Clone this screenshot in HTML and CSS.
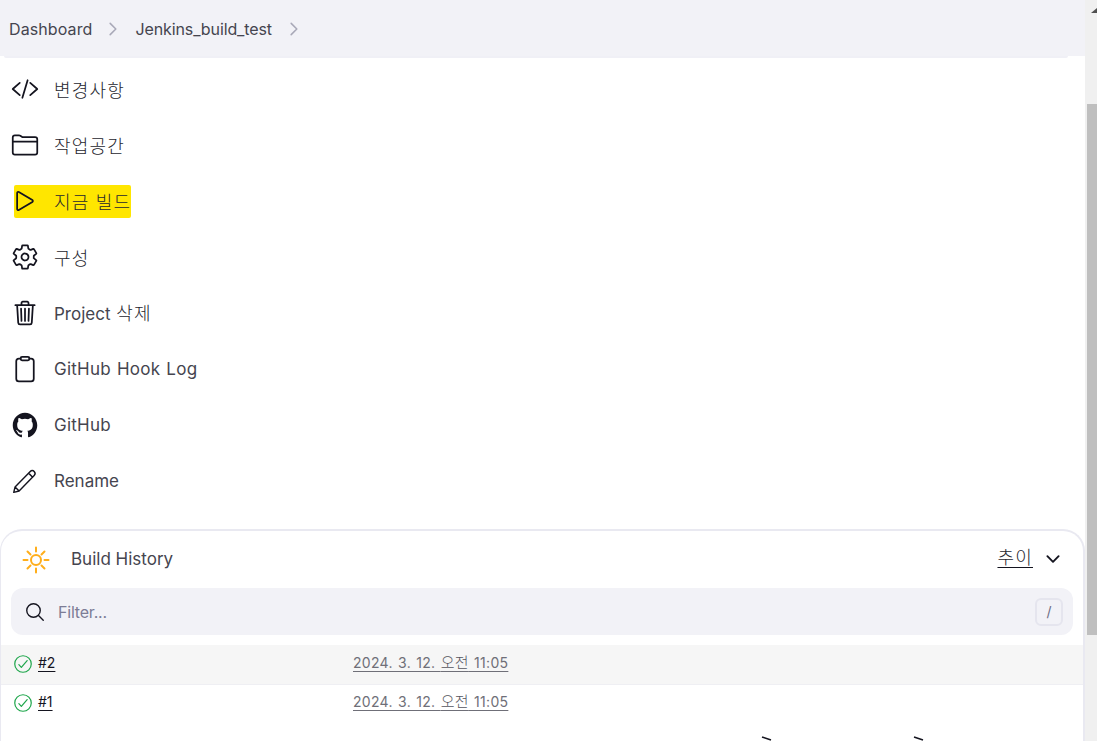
FILE: index.html
```html
<!DOCTYPE html>
<html lang="ko">
<head>
<meta charset="utf-8">
<title>Jenkins_build_test</title>
<link rel="stylesheet" href="styles.css">
</head>
<body>
<div class="page">
  <main class="main">
    <header class="crumbs">
      <a class="crumb crumb-root">Dashboard</a>
      <svg class="crumb-sep" viewBox="0 0 512 512"><path d="M184 112l144 144-144 144"/></svg>
      <a class="crumb crumb-job">Jenkins_build_test</a>
      <svg class="crumb-sep" viewBox="0 0 512 512"><path d="M184 112l144 144-144 144"/></svg>
    </header>
    <div class="crumbs-edge"></div>
    <nav class="tasks">
      <a class="task">
        <svg class="icon" viewBox="0 0 512 512"><path d="M160 368L32 256l128-112M352 368l128-112-128-112M304 96l-96 320"/></svg>
        <span class="ko">변경사항</span>
      </a>
      <a class="task">
        <svg class="icon" viewBox="0 0 512 512"><path d="M440 432H72a40 40 0 01-40-40V120a40 40 0 0140-40h75.89a40 40 0 0122.19 6.72l27.84 18.56a40 40 0 0022.19 6.72H440a40 40 0 0140 40v240a40 40 0 01-40 40zM32 192h448"/></svg>
        <span class="ko">작업공간</span>
      </a>
      <a class="task">
        <span class="marker">
          <svg class="icon icon-play" viewBox="0 0 512 512"><path d="M112 111v290c0 17.44 17 28.52 31 20.16l247.9-148.37c12.12-7.25 12.12-26.33 0-33.58L143 90.84c-14-8.36-31 2.72-31 20.16z"/></svg>
          <span class="ko">지금 빌드</span>
        </span>
      </a>
      <a class="task">
        <svg class="icon" viewBox="0 0 512 512"><path d="M262.29 192.31a64 64 0 1057.4 57.4 64.13 64.13 0 00-57.4-57.4zM416.39 256a154.34 154.34 0 01-1.53 20.79l45.21 35.46a10.81 10.81 0 012.45 13.75l-42.77 74a10.81 10.81 0 01-13.14 4.59l-44.9-18.08a16.11 16.11 0 00-15.17 1.75A164.48 164.48 0 01325 400.8a15.94 15.94 0 00-8.82 12.14l-6.73 47.89a11.08 11.08 0 01-10.68 9.17h-85.54a11.11 11.11 0 01-10.69-8.87l-6.72-47.82a16.07 16.07 0 00-9-12.22 155.3 155.3 0 01-21.46-12.57 16 16 0 00-15.11-1.71l-44.89 18.07a10.81 10.81 0 01-13.14-4.58l-42.77-74a10.8 10.8 0 012.45-13.75l38.21-30a16.05 16.05 0 006-14.08c-.36-4.17-.58-8.33-.58-12.5s.21-8.27.58-12.35a16 16 0 00-6.07-13.94l-38.19-30A10.81 10.81 0 0149.48 186l42.77-74a10.81 10.81 0 0113.14-4.59l44.9 18.08a16.11 16.11 0 0015.17-1.75A164.48 164.48 0 01187 111.2a15.94 15.94 0 008.82-12.14l6.73-47.89A11.08 11.08 0 01213.23 42h85.54a11.11 11.11 0 0110.69 8.87l6.72 47.82a16.07 16.07 0 009 12.22 155.3 155.3 0 0121.46 12.57 16 16 0 0015.11 1.71l44.89-18.07a10.81 10.81 0 0113.14 4.58l42.77 74a10.8 10.8 0 01-2.45 13.75l-38.21 30a16.05 16.05 0 00-6.05 14.08c.33 4.14.55 8.3.55 12.47z"/></svg>
        <span class="ko">구성</span>
      </a>
      <a class="task">
        <svg class="icon" viewBox="0 0 512 512"><path d="M112 112l20 320c.95 18.49 14.4 32 32 32h184c17.67 0 30.87-13.51 32-32l20-320M80 112h352M192 112V72a23.93 23.93 0 0124-24h80a23.93 23.93 0 0124 24v40M256 176v224M184 176l8 224M328 176l-8 224"/></svg>
        <span class="mixed">Project <span class="ko-inline">삭제</span></span>
      </a>
      <a class="task">
        <svg class="icon" viewBox="0 0 512 512"><path d="M336 64h32a48 48 0 0148 48v320a48 48 0 01-48 48H144a48 48 0 01-48-48V112a48 48 0 0148-48h32"/><rect x="176" y="32" width="160" height="64" rx="26" ry="26"/></svg>
        <span class="en-wide">GitHub Hook Log</span>
      </a>
      <a class="task">
        <svg class="icon icon-fill" viewBox="0 0 512 512"><path d="M256 32C132.3 32 32 134.9 32 261.7c0 101.5 64.2 187.5 153.2 217.9a17.56 17.56 0 003.8.4c8.3 0 11.5-6.1 11.5-11.4 0-5.5-.2-19.9-.3-39.1a102.4 102.4 0 01-22.6 2.7c-43.1 0-52.9-33.5-52.9-33.5-10.2-26.5-24.9-33.6-24.9-33.6-19.5-13.7-.1-14.1 1.4-14.1h.1c22.5 2 34.3 23.8 34.3 23.8 11.2 19.6 26.2 25.1 39.6 25.1a63 63 0 0025.6-6c2-14.8 7.8-24.9 14.2-30.7-49.7-5.8-102-25.5-102-113.5 0-25.1 8.7-45.6 23-61.6-2.3-5.8-10-29.2 2.2-60.8a18.64 18.64 0 015-.5c8.1 0 26.4 3.1 56.6 24.1a208.21 208.21 0 01112.2 0c30.2-21 48.5-24.1 56.6-24.1a18.64 18.64 0 015 .5c12.2 31.6 4.5 55 2.2 60.8 14.3 16.1 23 36.6 23 61.6 0 88.2-52.4 107.6-102.3 113.3 8 7.1 15.2 21.1 15.2 42.5 0 30.7-.3 55.5-.3 63 0 5.4 3.1 11.5 11.4 11.5a19.35 19.35 0 004-.4C415.9 449.2 480 363.1 480 261.7 480 134.9 379.7 32 256 32z"/></svg>
        <span class="en-wide">GitHub</span>
      </a>
      <a class="task">
        <svg class="icon icon-pencil" viewBox="0 0 512 512"><path d="M50 464l24-98L352 82c22-22 52-22 72 0s22 50 0 72L148 440zM322 112l74 74M74 366l74 74"/></svg>
        <span>Rename</span>
      </a>
    </nav>
    <section class="history">
      <div class="history-head">
        <svg class="sun" viewBox="0 0 28 28"><circle cx="14" cy="14" r="5"/><path d="M14 1.5v4M14 22.5v4M1.5 14h4M22.5 14h4M5.5 5.5l3 3M19.5 19.5l3 3M5.5 22.5l3-3M19.5 8.5l3-3"/></svg>
        <h2 class="history-title">Build History</h2>
        <a class="trend">추이</a>
        <svg class="chevron" viewBox="0 0 512 512"><path d="M112 184l144 144 144-144"/></svg>
      </div>
      <div class="filter">
        <svg class="search" viewBox="0 0 512 512"><path d="M221.09 64a157.09 157.09 0 10157.09 157.09A157.1 157.1 0 00221.09 64zM338.29 338.29L448 448"/></svg>
        <span class="filter-text">Filter...</span>
        <kbd class="key">/</kbd>
      </div>
      <div class="build build-odd">
        <svg class="status" viewBox="0 0 512 512"><path d="M448 256c0-106-86-192-192-192S64 150 64 256s86 192 192 192 192-86 192-192z"/><path d="M352 176L217.6 336 160 272"/></svg>
        <a class="build-id">#2</a>
        <a class="build-date">2024. 3. 12. <span class="date-ko">오전</span> 11:05</a>
      </div>
      <div class="build">
        <svg class="status" viewBox="0 0 512 512"><path d="M448 256c0-106-86-192-192-192S64 150 64 256s86 192 192 192 192-86 192-192z"/><path d="M352 176L217.6 336 160 272"/></svg>
        <a class="build-id">#1</a>
        <a class="build-date">2024. 3. 12. <span class="date-ko">오전</span> 11:05</a>
      </div>
    </section>
    <svg class="stray stray-a" viewBox="0 0 12 5"><path d="M1 1l9 3"/></svg>
    <svg class="stray stray-b" viewBox="0 0 12 5"><path d="M1 1l9 3"/></svg>
  </main>
  <div class="scrollbar">
    <div class="scroll-arrow"></div>
    <div class="scroll-thumb"></div>
  </div>
</div>
</body>
</html>
```

FILE: styles.css
```css
* { box-sizing: border-box; }
html, body { margin: 0; height: 100%; overflow: hidden; background: #fff; }
body {
  font-family: Inter, "Noto Sans CJK KR", sans-serif;
  font-size: 17px;
  color: #45454f;
}
a { color: inherit; }
.page { display: flex; height: 741px; overflow: hidden; }
.main { position: relative; width: 1085px; flex: none; overflow: hidden; }

.crumbs {
  height: 56px;
  display: flex;
  align-items: center;
  padding: 2px 0 0 9px;
  background: #f2f2f7;
  font-size: 16px;
}
.crumb-root { letter-spacing: .1px; margin-right: -1px; }
.crumb-job { letter-spacing: -.11px; }
.crumbs-edge {
  height: 2px;
  margin: 0 17px 0 4px;
  background: #f0f0f6;
  border-radius: 0 0 6px 6px;
}
.crumb-sep {
  width: 20px;
  height: 20px;
  margin: 0 12px;
  fill: none;
  stroke: #a9a9b8;
  stroke-width: 40;
  stroke-linecap: round;
  stroke-linejoin: round;
}

.tasks { display: flex; flex-direction: column; padding-top: 3px; }
.task {
  height: 56px;
  display: flex;
  align-items: center;
  gap: 15px;
  padding-left: 11px;
}
.ko {
  font-size: 18px;
  font-weight: 300;
  color: #26262e;
  letter-spacing: 1.2px;
  margin-bottom: 1px;
}
.ko-inline {
  font-size: 18px;
  font-weight: 300;
  color: #26262e;
  letter-spacing: 1.2px;
}
.mixed { margin-bottom: 3px; word-spacing: 1px; }
.en-wide { letter-spacing: .25px; word-spacing: 1px; }
.icon {
  width: 28px;
  height: 28px;
  flex: none;
  fill: none;
  stroke: #14141f;
  stroke-width: 32;
  stroke-linecap: round;
  stroke-linejoin: round;
}
.icon-fill { fill: #14141f; stroke: none; }
.icon-pencil { stroke-width: 26; }
.marker {
  display: flex;
  align-items: center;
  gap: 15px;
  height: 33px;
  margin-left: 3px;
  background: #ffe600;
  border-radius: 2px;
}
.icon-play { margin-left: -3px; }

.history {
  margin-top: 20px;
  height: 260px;
  border: 2px solid #e9e9f1;
  border-bottom: none;
  border-left-width: 1px;
  border-radius: 22px 22px 0 0;
}
.history-head {
  height: 55px;
  display: flex;
  align-items: center;
  padding: 0 20px 0 21px;
}
.sun { width: 28px; height: 28px; margin-top: 2px; fill: none; stroke: #ffae1a; stroke-width: 2; stroke-linecap: round; margin-right: 21px; }
.history-title { margin: 0; font-size: 17px; font-weight: 400; flex: 1; }
.trend {
  font-size: 18px;
  font-weight: 300;
  color: #26262e;
  letter-spacing: 1.2px;
  text-decoration: underline;
  text-underline-offset: 3px;
  text-decoration-color: #14141f;
  margin-bottom: 5px;
}
.chevron { width: 20px; height: 20px; margin-left: 10px; fill: none; stroke: #14141f; stroke-width: 48; stroke-linecap: round; stroke-linejoin: round; }

.filter {
  height: 47px;
  margin: 2px 10px 0 10px;
  display: flex;
  align-items: center;
  padding: 0 10px 0 13px;
  background: #f2f2f7;
  border-radius: 12px;
}
.search { width: 22px; height: 22px; fill: none; stroke: #14141f; stroke-width: 32; stroke-linecap: round; stroke-miterlimit: 10; margin-right: 12px; }
.filter-text { flex: 1; color: #7d7d96; font-size: 16px; letter-spacing: -.2px; }
.key {
  width: 28px;
  height: 28px;
  display: flex;
  align-items: center;
  justify-content: center;
  border: 2px solid #e5e5ee;
  border-radius: 6px;
  font-family: Inter, sans-serif;
  font-size: 14px;
  color: #6d6d85;
}

.build {
  height: 40px;
  display: flex;
  align-items: flex-start;
  padding: 7px 0 0 11px;
  font-size: 14px;
  line-height: 20px;
}
.build-odd { margin-top: 10px; padding-top: 8px; background: #f6f6f6; border-bottom: 1px solid #efeff3; }
.status { width: 22px; height: 22px; flex: none; fill: none; stroke: #1ea64b; stroke-width: 28; stroke-linecap: round; stroke-linejoin: round; }
.build-id { margin-left: 4px; width: 315px; color: #14141f; text-decoration: underline; text-underline-offset: 3px; }
.build-date { color: #6f6f78; letter-spacing: .3px; word-spacing: 1px; text-decoration: underline; text-underline-offset: 3px; }
.date-ko { font-size: 15px; font-weight: 300; color: #55555e; }

.stray { position: absolute; top: 736px; width: 12px; height: 5px; fill: none; stroke: #14141f; stroke-width: 1.5; }
.stray-a { left: 761px; }
.stray-b { left: 913px; }

.scrollbar { position: relative; flex: 1; background: #f0f0f0; }
.scroll-arrow {
  position: absolute;
  top: 8px;
  left: 6px;
  width: 0;
  height: 0;
  border-left: 6px solid transparent;
  border-right: 6px solid transparent;
  border-bottom: 5px solid #505050;
}
.scroll-thumb { position: absolute; top: 104px; left: 2px; right: 0; height: 531px; background: #bfbfbf; }
```
